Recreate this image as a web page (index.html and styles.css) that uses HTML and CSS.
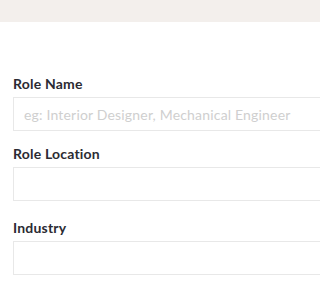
FILE: index.html
```html
<!DOCTYPE html>
<html>
<head>
<meta charset="utf-8">
<link rel="stylesheet" href="styles.css">
</head>
<body>
<div class="page">
  <div class="topbar"></div>
  <form class="form">
    <div class="field">
      <label class="label">Role Name</label>
      <input class="input" type="text" placeholder="eg: Interior Designer, Mechanical Engineer">
    </div>
    <div class="field field-second">
      <label class="label">Role Location</label>
      <input class="input" type="text">
    </div>
    <div class="field field-third">
      <label class="label">Industry</label>
      <input class="input" type="text">
    </div>
  </form>
</div>
</body>
</html>
```
FILE: styles.css
```css
html, body {
  margin: 0;
  padding: 0;
  background: #ffffff;
  font-family: "Lato", "Liberation Sans", sans-serif;
}
.page {
  overflow: hidden;
}
.topbar {
  height: 22px;
  background: #f3efec;
}
.form {
  padding: 53px 0 0 13px;
  display: flex;
  flex-direction: column;
}
.field {
  display: flex;
  flex-direction: column;
}
.field-second { margin-top: 14px; }
.field-third { margin-top: 18px; }
.label {
  font-size: 14px;
  font-weight: 700;
  letter-spacing: 0.2px;
  color: #2b2b33;
  line-height: 18px;
  margin-bottom: 4px;
}
.input {
  box-sizing: border-box;
  width: 100%;
  height: 34px;
  border: 1px solid #e8e8e8;
  border-right: none;
  border-radius: 0;
  padding: 0 0 0 10px;
  font-family: "Lato", "Liberation Sans", sans-serif;
  font-size: 14px;
  letter-spacing: 0.18px;
  color: #333;
  background: #fff;
  outline: none;
}
.input::placeholder {
  color: #cfcfcf;
}
```
